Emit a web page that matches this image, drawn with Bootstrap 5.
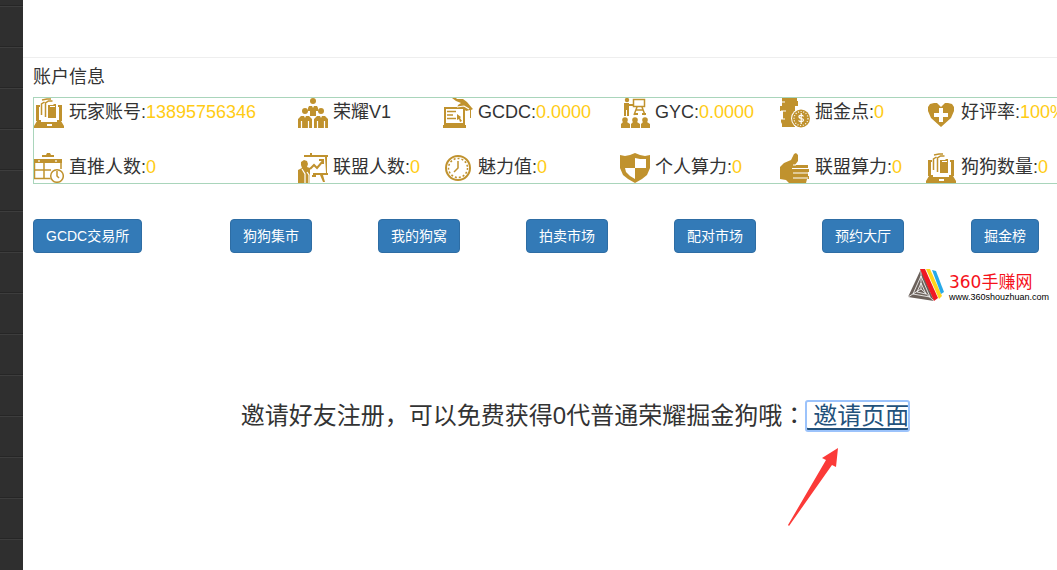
<!DOCTYPE html>
<html lang="zh-CN">
<head>
<meta charset="utf-8">
<meta name="viewport" content="width=device-width, initial-scale=1">
<title>账户信息</title>
<link href="https://cdn.jsdelivr.net/npm/bootstrap@5.3.0/dist/css/bootstrap.min.css" rel="stylesheet">
<style>
body{font-family:"Liberation Sans","Noto Sans CJK SC",sans-serif;color:#333;background:#fff;font-size:18px;line-height:30px}
.side{width:23px;background:linear-gradient(#3d3d3d 0 1px,#2f2f2f 1px 40px,#262626 40px 41px) 0 6px/100% 41px}
.topbar{height:58px;border-bottom:1px solid #eee}
.page-body{padding-left:10px}
.page-title{font-size:18px;line-height:30px;margin:4px 0 5px;font-weight:400}
.stats{display:grid;grid-template-columns:264fr 145fr 177fr 160fr 146fr 131fr;row-gap:25px;border:1px solid #a9d5bb;border-right:0;white-space:nowrap}
.stats>div{display:flex;min-width:0;gap:5px;line-height:28px}
.stats svg{width:30px;height:30px;flex:none;fill:#c0922e;stroke:#c0922e;stroke-width:0}
.stats .ln{fill:none;stroke-width:1.5}
.stats .ln2{fill:none;stroke-width:2}
.stats .wh{fill:#fff}
.stats .wl{fill:none;stroke:#fff;stroke-width:1.2}
.stats b{font-weight:400;color:#ffcc14}
.actions{display:grid;grid-template-columns:197fr 148fr 148fr 148fr 148fr 149fr 86fr;margin-top:35px;justify-items:start}
.actions .btn{--bs-btn-bg:#337ab7;--bs-btn-border-color:#2e6da4;--bs-btn-font-size:14px;--bs-btn-line-height:20px;--bs-btn-border-radius:4px;--bs-btn-padding-y:6px;--bs-btn-padding-x:12px;white-space:nowrap}
.brand{margin-top:15px;padding-right:8px;gap:5px}
.brand svg{width:36px;height:34px}
.brand-name{font-size:17px;line-height:20px;padding-top:4px;color:#f5121b}
.brand-name span{font-family:"DejaVu Sans",sans-serif}
.brand-url{font-size:9px;line-height:8px;color:#000}
.invite{font-size:24px;line-height:30px;margin-top:99px;padding-left:60px}
.invite .colon{font-family:"Noto Sans CJK TC",sans-serif;line-height:1}
.invite a{color:#23527c;border-radius:2px;outline:2px solid #9cc3fb;outline-offset:-1px;display:inline-block;height:30px;padding-left:7px;text-decoration:none;box-shadow:inset 0 -3px #23527c}
.pointer{position:absolute;left:-18px;top:47px;width:52px;height:80px;fill:#fb3a38}
</style>
</head>
<body>
<div class="d-flex min-vh-100">
<aside class="side flex-shrink-0"></aside>
<main class="flex-grow-1 overflow-hidden">
<header class="topbar"></header>
<div class="page-body">
<h1 class="page-title">账户信息</h1>
<section class="stats">
<div><svg viewBox="0 0 30 30"><g id="laptop"><path d="M2 7h4v2H5v13h2v2h16v-2h2V9h-1V7h4v16h-1l3 5v2H0v-2l3-5H2z"/><path class="wh" d="M6 7h18v15H6zM13 26h5v2h-5z"/><path class="ln" d="M7.500 17V6l3-2M11.500 19V5l3-2h4M8 2l5-1h4"/><path d="M14 7h5l1-1h2v14h-8z"/><path class="wh" d="M16 8h5v1h-5z"/></g></svg><span>玩家账号:<b>13895756346</b></span></div>
<div><svg viewBox="0 0 30 30"><circle cx="15" cy="3" r="3"/><path d="M10 10l1-2h3l1 2 1-2h3l1 2v3h-2v5h-6v-5h-2z"/><circle cx="7" cy="13" r="3"/><circle cx="23" cy="13" r="3"/><path d="M0 30V21l3-3h3l1 2 1-2h3l3 3v9zM16 30V21l3-3h3l1 2 1-2h3l3 3v9z"/><path class="wl" d="M3.500 23v7M10.500 23v7M19.500 23v7M26.500 23v7"/></svg><span>荣耀V1</span></div>
<div><svg viewBox="0 0 30 30"><path d="M1 9h21v18h1v3H0v-3h1z"/><path class="wh" d="M3 11h17v14H3z"/><path class="ln" d="M4 13.500h9M4 17h6M4 20.500h9"/><path d="M14 16l4 3-1 1 2 3-2 1-1-3-2 1zM9 0h4l1 1h6l4 3 5 6 1 1-2 1v8h-1v-8l-4 1-2-2-7-1 1-3 3-2-5-2z"/><path class="wl" d="M14 9l7-1 5 3"/></svg><span>GCDC:<b>0.0000</b></span></div>
<div><svg viewBox="0 0 30 30"><circle cx="7" cy="2" r="2.200"/><path d="M4 5h5v1h4v2H9v10H7v-6H6v6H4z"/><path class="ln" d="M13.500 1.500h11v7h-11zM17 9l-3 8M22 9l3 8M16 12h7"/><path d="M14 15h4v2h-4zM22 15h4v2h-4z"/><path d="M1 30v-4l2-2v-1h4v1l3 2v4zM11 30v-4l2-2v-1h4v1l3 2v4zM21 30v-4l2-2v-1h4v1l3 2v4z"/><circle cx="5" cy="22" r="2.800"/><circle cx="15" cy="22" r="2.800"/><circle cx="25" cy="22" r="2.800"/></svg><span>GYC:<b>0.0000</b></span></div>
<div><svg viewBox="0 0 30 30"><path d="M2 0h15v3h1v5h-3v5l-2 4v7l2 2v3H2v-3l-1-2v-3h2v-8H0V8h2z"/><path class="wl" d="M1 4h4M1 13h5M1 21h4"/><circle class="wh" cx="21" cy="20.500" r="10"/><circle cx="21" cy="20.500" r="9"/><circle class="wl" cx="21" cy="20.500" r="7" stroke-dasharray="1 1.700"/><path class="wl" d="M23.500 18.500c-1-2-5-1.500-4.500.5s4.500 1 4.500 3-4 2-5 .5M21.200 15v11"/></svg><span>掘金点:<b>0</b></span></div>
<div><svg viewBox="0 0 30 30"><path d="M15 29L5 20 2 13V9l2-3 4-1h3l4 4 4-4h3l4 1 2 3v4l-3 7z"/><path class="wh" d="M13 10h4v5h5v4h-5v5h-4v-5H8v-4h5z"/></svg><span>好评率:<b>100%</b></span></div>
<div><svg viewBox="0 0 30 30"><path d="M8 2h4l1-2h3l1 2h3v2H8zM0 6h28v4H0z"/><path class="ln" d="M.5 8v17.500H17M10 8v18M27 8v8M0 17h17"/><path class="wl" d="M5 7v2M22 7v2"/><circle class="wh" cx="23" cy="23" r="7"/><circle class="ln" cx="23" cy="23" r="6.300"/><path class="ln" d="M23 18v5l2 2"/></svg><span>直推人数:<b>0</b></span></div>
<div><svg viewBox="0 0 30 30"><path d="M12 0h2v2h16v2H6V2h6zM27 4h2v16h1v2h-5l2 7h-2l-3-7h-4v2h-4v-2h1v-2h13zM3 9l3-2 3 1 1 3-1 3 3 1v15H0V17l4-2-1-3z"/><path class="wl" d="M4 16l3 5v9M9 19l2 3v8"/><path class="ln2" d="M12 16l4-4 3 3 6-7M21 7h4v4"/></svg><span>联盟人数:<b>0</b></span></div>
<div><svg viewBox="0 0 30 30"><circle class="ln2" cx="15" cy="15" r="12"/><circle class="ln" cx="15" cy="15" r="9.500" stroke-dasharray="2 2"/><path class="ln" d="M15 8v7l-4 4"/></svg><span>魅力值:<b>0</b></span></div>
<div><svg viewBox="0 0 30 30"><path d="M15 0l5 2 5 1 5-1v13l-3 7-5 4-7 4-7-4-5-4-3-7V2l5 1 5-1z"/><path class="wh" d="M15 5l5 1h6v9H15zM15 15v11l-5-3-4-4-1-4z"/></svg><span>个人算力:<b>0</b></span></div>
<div><svg viewBox="0 0 30 30"><path d="M14 1l2-1 2 2v6l-3 4h13v4h1v3h-1v4h1v3h-2l-1 4H9l-3-3-6-1V14l4-4 7-3z"/><path class="wl" d="M13 12h3M12 15.500h17M13 20h16M13 25h15"/></svg><span>联盟算力:<b>0</b></span></div>
<div><svg viewBox="0 0 30 30"><use href="#laptop"/></svg><span>狗狗数量:<b>0</b></span></div>
</section>
<section class="actions">
<button type="button" class="btn btn-primary">GCDC交易所</button>
<button type="button" class="btn btn-primary">狗狗集市</button>
<button type="button" class="btn btn-primary">我的狗窝</button>
<button type="button" class="btn btn-primary">拍卖市场</button>
<button type="button" class="btn btn-primary">配对市场</button>
<button type="button" class="btn btn-primary">预约大厅</button>
<button type="button" class="btn btn-primary">掘金榜</button>
</section>
<div class="brand d-flex justify-content-end">
<svg viewBox="0 0 36 34"><path fill="#6b615b" d="M13 1L0 29l26 4z"/><path fill="none" stroke="#fff" stroke-width=".8" d="M13 8L5 26l17 3zM13 15l-4 9 9 2zM13 1v20L0 29M13 21l13 12"/><path fill="#f01923" d="M12 1h5l13 29-4 3z"/><path fill="#ffd51c" d="M18 1h4l12 27-3 3z"/><path fill="#27a9e8" d="M24 2l4 1 8 21-3 2z"/></svg>
<div><div class="brand-name"><span>360</span>手赚网</div><div class="brand-url">www.360shouzhuan.com</div></div>
</div>
<p class="invite text-center mb-0">邀请好友注册，可以免费获得0代普通荣耀掘金狗哦<span class="colon" lang="zh-TW">：</span><span class="position-relative d-inline-block"><a href="#">邀请页面</a><svg class="pointer" viewBox="0 0 52 80"><path d="M50 0L34 10l4 2L0 77l1 1L44 17l4 2z"/></svg></span></p>
</div>
</main>
</div>
<script src="https://cdn.jsdelivr.net/npm/bootstrap@5.3.0/dist/js/bootstrap.bundle.min.js"></script>
</body>
</html>
